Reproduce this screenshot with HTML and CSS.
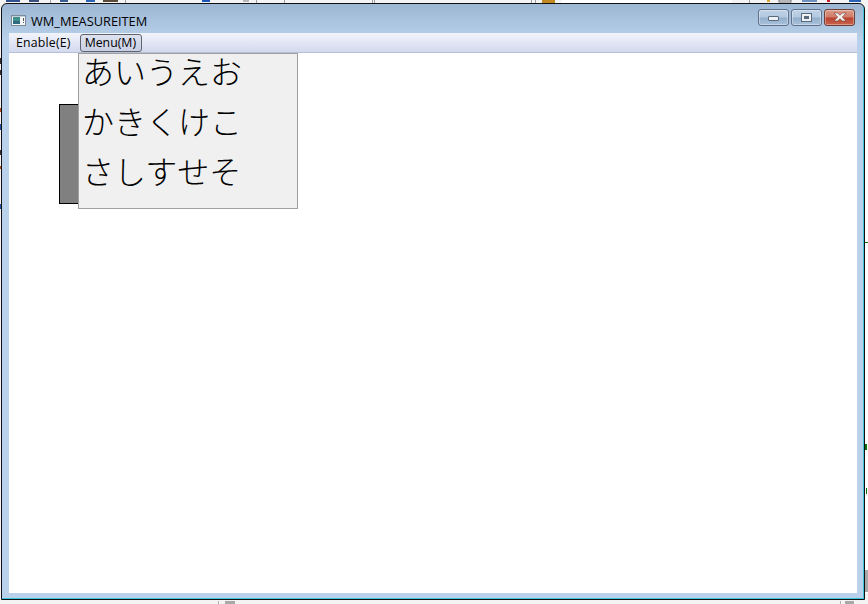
FILE: index.html
```html
<!doctype html>
<html>
    <head>
        <meta charset="utf-8">
        <link rel="stylesheet" href="styles.css">
    </head>

    <body>
    <!-- bits of the desktop that show round the window -->
    <svg class="desktop" width="868" height="604">
        <rect x="6" y="0" width="14" height="2" fill="#33508f"/>
        <rect x="29" y="0" width="10" height="2" fill="#3d4f80"/>
        <rect x="60" y="0" width="8" height="2" fill="#3b5f95"/>
        <rect x="86" y="0" width="9" height="2" fill="#2b62b5"/>
        <rect x="103" y="0" width="15" height="2" fill="#5c4a38"/>
        <rect x="50" y="0" width="1" height="3" fill="#a0a0a0"/>
        <rect x="125" y="0" width="1" height="3" fill="#a0a0a0"/>
        <rect x="202" y="0" width="8" height="2" fill="#1c57b8"/>
        <rect x="243" y="0" width="6" height="2" fill="#b8b8b8"/>
        <rect x="256" y="0" width="1" height="3" fill="#a0a0a0"/>
        <rect x="284" y="0" width="1" height="3" fill="#a0a0a0"/>
        <rect x="372" y="0" width="1" height="3" fill="#a0a0a0"/>
        <rect x="374" y="0" width="1" height="3" fill="#a0a0a0"/>
        <rect x="531" y="0" width="1" height="3" fill="#a0a0a0"/>
        <rect x="535" y="0" width="1" height="3" fill="#a0a0a0"/>
        <rect x="542" y="0" width="13" height="3" fill="#c08a20"/>
        <rect x="562" y="0" width="170" height="3" fill="#ffffff"/>
        <rect x="749" y="0" width="1" height="3" fill="#a0a0a0"/>
        <rect x="767" y="0" width="3" height="2" fill="#d8a830"/>
        <rect x="779" y="0" width="12" height="2" fill="#ffffff" stroke="#707070"/>
        <rect x="802" y="0" width="15" height="2" fill="#6f8fc0"/>
        <rect x="827" y="0" width="3" height="2" fill="#c82030"/>
        <rect x="849" y="0" width="12" height="2" fill="#2b62b5"/>
        <rect x="0" y="58" width="1" height="6" fill="#303030"/>
        <rect x="0" y="70" width="1" height="5" fill="#303030"/>
        <rect x="0" y="108" width="1" height="4" fill="#b05020"/>
        <rect x="0" y="124" width="1" height="6" fill="#2050a0"/>
        <rect x="0" y="150" width="1" height="5" fill="#303030"/>
        <rect x="0" y="166" width="1" height="3" fill="#b05020"/>
        <rect x="0" y="204" width="1" height="5" fill="#2050a0"/>
        <rect x="865" y="20" width="3" height="573" fill="#ffffff"/>
        <rect x="865" y="242" width="3" height="1" fill="#107010"/>
        <rect x="865" y="444" width="2" height="6" fill="#107010"/>
        <rect x="866" y="488" width="1" height="6" fill="#107010"/>
        <rect x="865" y="570" width="3" height="22" fill="#a8a8a8"/>
        <rect x="218" y="601" width="1" height="3" fill="#b0b0b0"/>
        <rect x="225" y="601" width="10" height="3" fill="#a8a8a8"/>
        <rect x="840" y="601" width="1" height="3" fill="#b0b0b0"/>
        <rect x="845" y="601" width="9" height="3" fill="#a8a8a8"/>
    </svg>

    <div class="window">
        <div class="titlebar">
            <svg class="app-icon" width="15" height="11" viewBox="0 0 15 11">
                <rect x="0.5" y="0.5" width="14" height="10" fill="#f4f6f8" stroke="#7d8b99"/>
                <rect x="1" y="1" width="13" height="1" fill="#c4d0dc"/>
                <rect x="2" y="2" width="7" height="7" fill="#3f8f8a"/>
                <rect x="2" y="6" width="7" height="3" fill="#2f6a80"/>
                <rect x="12" y="3" width="1" height="3" fill="#555"/>
                <rect x="12" y="7" width="1" height="1" fill="#555"/>
            </svg>
            <div class="title">WM_MEASUREITEM</div>
            <div class="caption-buttons">
                <div class="caption-button">
                    <div class="min-glyph"></div>
                </div>
                <div class="caption-button">
                    <div class="max-glyph"></div>
                </div>
                <div class="caption-button close">
                    <svg width="16" height="10" viewBox="0 0 16 10">
                        <path d="M2 1h3.5L8 3.2 10.5 1H14L10.3 5 14 9h-3.5L8 6.8 5.5 9H2l3.7-4z" fill="#f2f2f2" stroke="#6e4038" stroke-width="0.6"/>
                    </svg>
                </div>
            </div>
        </div>

        <ul class="menubar">
            <li>Enable(E)</li>
            <li class="open">Menu(M)</li>
        </ul>

        <div class="client">
            <div class="gray-box"></div>
            <ul class="popup">
                <li>あいうえお</li>
                <li>かきくけこ</li>
                <li>さしすせそ</li>
            </ul>
        </div>
    </div>
    </body>
</html>
```

FILE: styles.css
```css
body {
    margin: 0;
    height: 604px;
    overflow: hidden;
    background-color: #f4f4f4;
    font-family: "Open Sans", "Noto Sans", sans-serif;
}

* {
    box-sizing: border-box;
}

.desktop {
    position: absolute;
    top: 0;
    left: 0;
}

.window {
    position: absolute;
    top: 3px;
    left: 1px;
    width: 864px;
    height: 597px;
    display: flex;
    flex-direction: column;
    padding: 0 7px 6px 7px;
    border: 1px solid #101010;
    border-radius: 6px 6px 0 0;
    background: linear-gradient(#9cb6d3, #b9d1ea 36px);
    box-shadow: inset -1px -1px 0 #3fc4dc;
}

.titlebar {
    height: 29px;
    flex: none;
    display: flex;
    align-items: center;
    color: #000;
    font-size: 12.8px;
}

.app-icon {
    margin: 4px 5px 0 2px;
}

.title {
    flex: 1;
    padding-top: 4px;
}

.caption-buttons {
    display: flex;
    gap: 2px;
    margin: 0 2px 3px 0;
}

.caption-button {
    width: 31px;
    height: 17px;
    display: flex;
    align-items: center;
    justify-content: center;
    border: 1px solid #5f718a;
    border-radius: 3px;
    background: linear-gradient(#bfd2e6 0, #b3c9e0 48%, #92aeca 52%, #a9c2dc 100%);
    box-shadow: inset 0 0 0 1px rgba(255, 255, 255, 0.35);
}

.caption-button.close {
    border-color: #6e4038;
    background: linear-gradient(#dc9a88 0, #cf7a66 48%, #b8412e 52%, #c9644e 100%);
}

.min-glyph {
    width: 11px;
    height: 5px;
    margin-top: 3px;
    background-color: #eef1f4;
    border: 1px solid #5a6a7e;
    border-radius: 1px;
}

.max-glyph {
    width: 11px;
    height: 9px;
    background-color: #eef1f4;
    border: 1px solid #5a6a7e;
    position: relative;
}

.max-glyph::after {
    content: "";
    position: absolute;
    left: 2px;
    top: 2px;
    width: 5px;
    height: 3px;
    background-color: #5a6a7e;
}

.menubar {
    height: 20px;
    flex: none;
    margin: 0;
    padding: 1px 0 0 0;
    display: flex;
    list-style-type: none;
    font-size: 12.3px;
    color: #000;
    background: linear-gradient(#f2f4fb, #d3d9ee);
    border-bottom: 1px solid #b8bfd4;
}

.menubar li {
    height: 18px;
    padding: 0 6px;
    margin-right: 2px;
    line-height: 15px;
    border: 1px solid transparent;
    border-radius: 3px;
}

.menubar li:first-child {
    letter-spacing: 0.2px;
}

.menubar li.open {
    padding: 0 5px 0 4px;
    border-color: #5e6470;
    background: linear-gradient(#dfe2ee, #c9cfe4);
}

.client {
    flex: 1;
    position: relative;
    background-color: #fff;
}

.gray-box {
    position: absolute;
    top: 51px;
    left: 50px;
    width: 100px;
    height: 100px;
    border: 1px solid #000;
    background-color: #808080;
}

.popup {
    position: absolute;
    top: 0;
    left: 69px;
    width: 220px;
    height: 156px;
    margin: 0;
    padding: 0 0 0 3px;
    list-style-type: none;
    border: 1px solid #a0a0a0;
    background-color: #f0f0f0;
    color: #000;
    font-family: "Noto Sans CJK JP", sans-serif;
    font-size: 32px;
    font-weight: 300;
}

.popup li {
    height: 50px;
    line-height: 32px;
}
```
